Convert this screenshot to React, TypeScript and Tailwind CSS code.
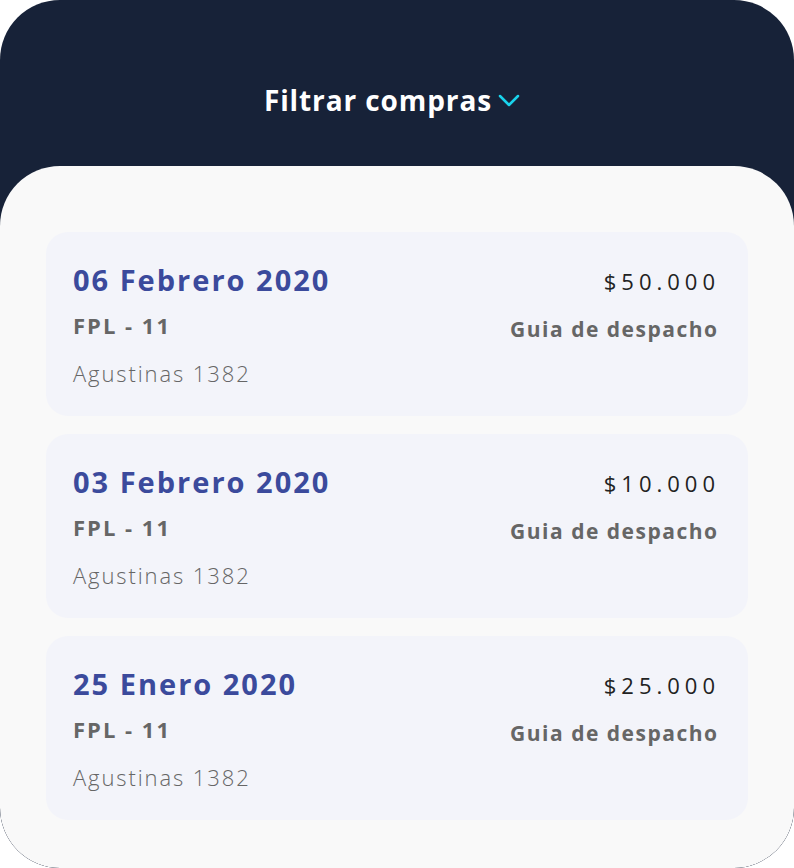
const purchases = [
  { date: '06 Febrero 2020', amount: '$50.000' },
  { date: '03 Febrero 2020', amount: '$10.000' },
  { date: '25 Enero 2020', amount: '$25.000' },
];

const PurchaseCard = ({ date, amount }: { date: string; amount: string }) => (
  <div className="h-[184px] rounded-[22px] bg-[#f3f4fa] pl-[27px] pr-[31px] pt-[29px] flex justify-between">
    <div className="flex flex-col">
      <p className="text-[29px] leading-[38px] font-bold text-[#3b4a9c] tracking-[2px]">{date}</p>
      <p className="mt-[12px] text-[22px] leading-[28px] font-bold text-[#666666] tracking-[2px]">FPL - 11</p>
      <p className="mt-[20px] text-[22px] leading-[28px] font-light text-[#666666] tracking-[1.9px]">Agustinas 1382</p>
    </div>
    <div className="flex flex-col items-end">
      <p className="mt-[6px] text-[22px] leading-[28px] text-[#222222] tracking-[5px] mr-[-3px]">{amount}</p>
      <p className="mt-[20px] text-[21px] leading-[28px] font-bold text-[#666666] tracking-[1.5px] mr-[-1.5px]">Guia de despacho</p>
    </div>
  </div>
);

export default function App() {
  return (
    <div className="w-[794px] h-[868px] bg-white" style={{ fontFamily: '"Open Sans", Lato, sans-serif' }}>
      <div className="h-full rounded-[60px] overflow-hidden bg-[#172238] flex flex-col">
        <div className="h-[166px] flex items-start justify-center pt-[82px]">
          <div className="flex items-center gap-[6px] mr-[10px]">
            <span className="text-[28px] leading-[36px] font-bold text-white tracking-[0.9px]">Filtrar compras</span>
            <svg width="22" height="14" viewBox="0 0 22 14" fill="none" className="mt-[2px]">
              <path d="M2 2l9 9 9-9" stroke="#19d3ec" strokeWidth="2.5" strokeLinecap="round" strokeLinejoin="round" />
            </svg>
          </div>
        </div>
        <div className="flex-1 bg-[#f9f9f9] rounded-[60px] px-[46px] pt-[66px] flex flex-col gap-[18px]">
          {purchases.map((p) => (
            <PurchaseCard key={p.date} date={p.date} amount={p.amount} />
          ))}
        </div>
      </div>
    </div>
  );
}
